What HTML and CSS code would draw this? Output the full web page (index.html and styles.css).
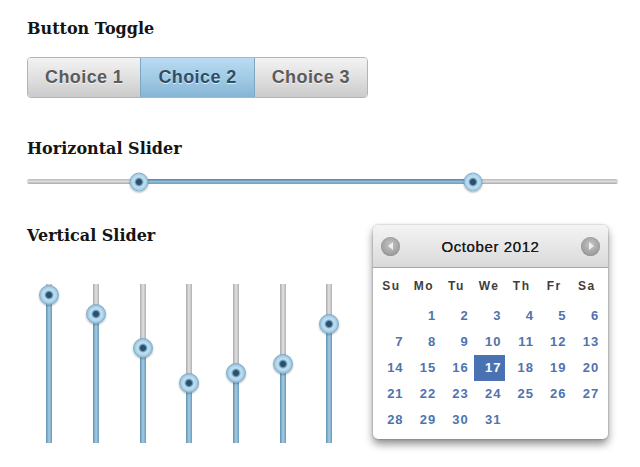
FILE: index.html
```html
<!DOCTYPE html>
<html>
<head>
<meta charset="utf-8">
<link rel="stylesheet" href="styles.css">
</head>
<body>
<div class="page">
  <h2 class="title t-toggle">Button Toggle</h2>
  <div class="toggle">
    <button class="seg">Choice 1</button>
    <button class="seg active">Choice 2</button>
    <button class="seg">Choice 3</button>
  </div>

  <h2 class="title t-h">Horizontal Slider</h2>
  <div class="hslider">
    <div class="htrack"></div>
    <div class="hfill" style="left:112px;width:334px"></div>
    <span class="thumb hthumb" style="left:112px"></span>
    <span class="thumb hthumb" style="left:446px"></span>
  </div>

  <div class="lower">
    <div class="vcol">
      <h2 class="title">Vertical Slider</h2>
      <div class="vsliders">
        <div class="vslider"><div class="vtrack"><div class="vfill" style="top:11px"></div><span class="thumb vthumb" style="top:11px"></span></div></div>
        <div class="vslider"><div class="vtrack"><div class="vfill" style="top:30px"></div><span class="thumb vthumb" style="top:30px"></span></div></div>
        <div class="vslider"><div class="vtrack"><div class="vfill" style="top:64px"></div><span class="thumb vthumb" style="top:64px"></span></div></div>
        <div class="vslider"><div class="vtrack"><div class="vfill" style="top:99px"></div><span class="thumb vthumb" style="top:99px"></span></div></div>
        <div class="vslider"><div class="vtrack"><div class="vfill" style="top:89px"></div><span class="thumb vthumb" style="top:89px"></span></div></div>
        <div class="vslider"><div class="vtrack"><div class="vfill" style="top:80px"></div><span class="thumb vthumb" style="top:80px"></span></div></div>
        <div class="vslider"><div class="vtrack"><div class="vfill" style="top:40px"></div><span class="thumb vthumb" style="top:40px"></span></div></div>
      </div>
    </div>

    <div class="cal">
      <div class="cal-head">
        <span class="nav nav-prev"><span class="tri-left"></span></span>
        <span class="cal-title">October 2012</span>
        <span class="nav nav-next"><span class="tri-right"></span></span>
      </div>
      <div class="cal-body">
        <div class="dow">
          <span>Su</span><span>Mo</span><span>Tu</span><span>We</span><span>Th</span><span>Fr</span><span>Sa</span>
        </div>
        <div class="days">
          <span></span><span>1</span><span>2</span><span>3</span><span>4</span><span>5</span><span>6</span>
          <span>7</span><span>8</span><span>9</span><span>10</span><span>11</span><span>12</span><span>13</span>
          <span>14</span><span>15</span><span>16</span><span class="sel">17</span><span>18</span><span>19</span><span>20</span>
          <span>21</span><span>22</span><span>23</span><span>24</span><span>25</span><span>26</span><span>27</span>
          <span>28</span><span>29</span><span>30</span><span>31</span><span></span><span></span><span></span>
        </div>
      </div>
    </div>
  </div>
</div>
</body>
</html>
```

FILE: styles.css
```css
* { box-sizing: border-box; }
html, body { margin: 0; padding: 0; background: #fff; }
.page { padding-left: 27px; width: 640px; height: 467px; overflow: hidden; }

.title {
  margin: 0;
  font-family: "DejaVu Serif", serif;
  font-weight: bold;
  font-size: 16px;
  line-height: 20px;
  color: #141414;
}
.t-toggle { margin-top: 19px; }

.toggle {
  display: flex;
  width: 341px;
  height: 41px;
  margin-top: 18px;
  border: 1px solid #b4b4b4;
  border-radius: 4px;
  overflow: hidden;
}
.seg {
  flex: 1;
  border: 0;
  margin: 0;
  padding: 0;
  font-family: "Liberation Sans", Arial, sans-serif;
  font-weight: bold;
  font-size: 18px;
  letter-spacing: 0.4px;
  color: #5b5b5b;
  text-shadow: 0 1px 0 rgba(255,255,255,.7);
  background: linear-gradient(#f3f3f3, #dedede 55%, #cbcbcb);
}
.seg + .seg { border-left: 1px solid #b0b0b0; }
.seg.active {
  color: #2f4d68;
  background: linear-gradient(#b9dcf2, #9fc9e4 55%, #86b5d5);
  border-left-color: #7ea7c3;
}
.seg.active + .seg { border-left-color: #7ea7c3; }

.t-h { margin-top: 41px; }

.hslider {
  position: relative;
  width: 591px;
  height: 20px;
  margin-top: 12px;
  padding-top: 8px;
}
.htrack {
  height: 5px;
  border-radius: 3px;
  background: linear-gradient(#b9b9b9, #dcdcdc 50%, #a9a9a9);
}
.hfill {
  position: absolute;
  top: 8px;
  height: 5px;
  background: linear-gradient(#4f7e9e, #8fbdd9 50%, #6f9dbb);
}

.thumb {
  position: absolute;
  width: 19px;
  height: 19px;
  border-radius: 50%;
  border: 1px solid #82aecb;
  background: radial-gradient(circle at 50% 50%, #2c506b 0, #2c506b 2.5px, #6a98b8 3.5px, #c2e1f1 5px, #b1d6ec 7px, #8bbad8 9.5px);
  box-shadow: 0 1px 2px rgba(0,0,0,.3);
  transform: translate(-50%, -50%);
}
.hthumb { top: 10.5px; }
.vthumb { left: 50%; width: 20px; height: 20px; }

.lower {
  display: flex;
  align-items: flex-start;
  margin-top: 35px;
}
.vcol { width: 346px; flex: none; }

.vsliders {
  display: grid;
  grid-template-columns: repeat(7, 46.67px);
  height: 159px;
  margin-top: 38px;
  margin-left: -1px;
}
.vslider { display: flex; justify-content: center; }
.vtrack {
  position: relative;
  width: 6px;
  height: 159px;
  background: linear-gradient(90deg, #a9a9a9, #e2e2e2 50%, #b0b0b0);
}
.vfill {
  position: absolute;
  left: 0; right: 0; bottom: 0;
  background: linear-gradient(90deg, #5f8eae, #a4cde5 50%, #6c9abb);
}

.cal {
  flex: none;
  width: 235px;
  height: 214px;
  margin-top: -1px;
  border-radius: 5px;
  background: #fff;
  box-shadow: 0 5px 9px rgba(0,0,0,.45), 0 0 2px rgba(0,0,0,.35);
  overflow: hidden;
  font-family: "Liberation Sans", Arial, sans-serif;
}
.cal-head {
  height: 43px;
  border-bottom: 1px solid #a8a8a8;
  background: linear-gradient(#f4f4f4, #e4e4e4 60%, #d9d9d9);
  display: flex;
  align-items: center;
  justify-content: space-between;
  padding: 0 8px 0 8px;
}
.cal-title {
  font-size: 15px;
  letter-spacing: 0.6px;
  color: #1c1c1c;
  text-shadow: 0 0 0.5px #1c1c1c;
}
.nav {
  width: 19px;
  height: 19px;
  border-radius: 50%;
  background: radial-gradient(circle at 50% 40%, #c4c4c4, #a5a5a5 55%, #8d8d8d);
  box-shadow: inset 0 0 1px rgba(0,0,0,.3);
  display: flex;
  align-items: center;
  justify-content: center;
}
.tri-left {
  width: 0; height: 0;
  border-top: 4px solid transparent;
  border-bottom: 4px solid transparent;
  border-right: 5px solid #f0f0f0;
  margin-left: -1px;
}
.tri-right {
  width: 0; height: 0;
  border-top: 4px solid transparent;
  border-bottom: 4px solid transparent;
  border-left: 5px solid #f0f0f0;
  margin-left: 2px;
}

.cal-body { padding: 5px 5px 6px 2px; }
.dow, .days {
  display: grid;
  grid-template-columns: repeat(7, 32.6px);
}
.dow {
  height: 26px;
  margin-bottom: 4px;
  align-items: center;
  text-align: center;
  font-size: 12px;
  font-weight: bold;
  letter-spacing: 1.5px;
  color: #3e3e3e;
}
.days { grid-auto-rows: 26px; }
.days span {
  text-align: right;
  padding-right: 4px;
  line-height: 26px;
  font-size: 13px;
  font-weight: bold;
  letter-spacing: 1px;
  color: #5073ad;
}
.days span.sel {
  background: #4a72b2;
  color: #fff;
  margin-left: 1.5px;
}
```
